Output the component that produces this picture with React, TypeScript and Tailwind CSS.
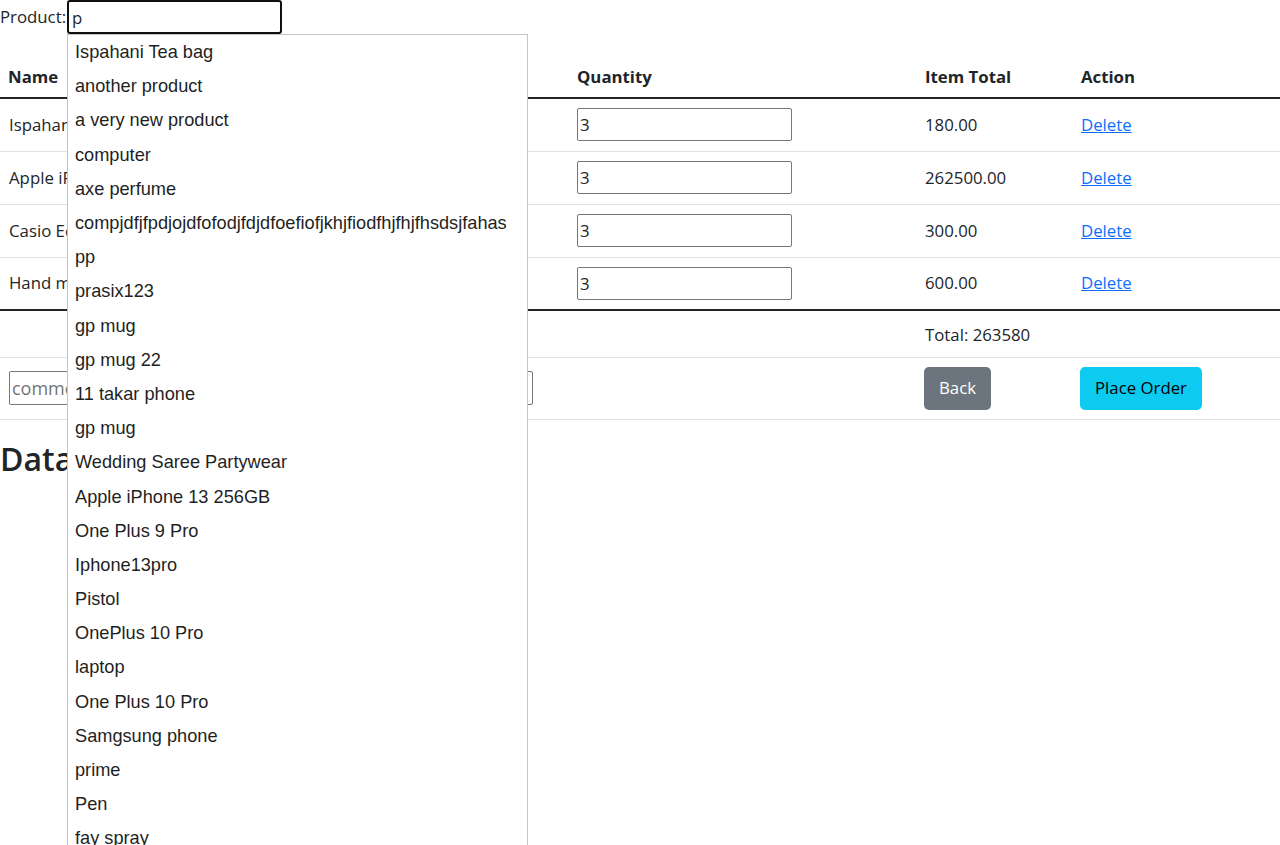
import React from "react";

const items = [
  { name: "Ispahani Tea bag", price: "60.00", qty: "3", total: "180.00" },
  { name: "Apple iPhone 13 256GB", price: "87500.00", qty: "3", total: "262500.00" },
  { name: "Casio Edifice Watch", price: "100.00", qty: "3", total: "300.00" },
  { name: "Hand mixer", price: "200.00", qty: "3", total: "600.00" },
];

const suggestions = [
  "Ispahani Tea bag",
  "another product",
  "a very new product",
  "computer",
  "axe perfume",
  "compjdfjfpdjojdfofodjfdjdfoefiofjkhjfiodfhjfhjfhsdsjfahas",
  "pp",
  "prasix123",
  "gp mug",
  "gp mug 22",
  "11 takar phone",
  "gp mug",
  "Wedding Saree Partywear",
  "Apple iPhone 13 256GB",
  "One Plus 9 Pro",
  "Iphone13pro",
  "Pistol",
  "OnePlus 10 Pro",
  "laptop",
  "One Plus 10 Pro",
  "Samgsung phone",
  "prime",
  "Pen",
  "fay spray",
];

function App() {
  return (
    <div className="relative h-[845px] overflow-hidden bg-white text-[16.8px] leading-6 text-[#212529] font-['Segoe_UI','Open_Sans',sans-serif]">
      {/* product search */}
      <div className="flex items-center h-[34px]">
        <label className="w-[67px] whitespace-nowrap">Product:</label>
        <input
          className="w-[215px] h-[34px] border-2 border-[#101010] rounded-[3px] px-[3px] outline-none text-[16.8px]"
          defaultValue="p"
        />
      </div>

      <table className="w-full table-fixed mt-[23px]">
        <colgroup>
          <col className="w-[285px]" />
          <col className="w-[284px]" />
          <col className="w-[348px]" />
          <col className="w-[156px]" />
          <col />
        </colgroup>
        <thead>
          <tr className="border-b-2 border-[#212529]">
            <th className="text-left font-bold px-2 py-2">Name</th>
            <th className="text-left font-bold px-2 py-2">Price</th>
            <th className="text-left font-bold px-2 py-2">Quantity</th>
            <th className="text-left font-bold px-2 py-2">Item Total</th>
            <th className="text-left font-bold px-2 py-2">Action</th>
          </tr>
        </thead>
        <tbody>
          {items.map((it, i) => (
            <tr
              key={it.name}
              className={
                i === items.length - 1
                  ? "border-b-2 border-[#212529]"
                  : "border-b border-[#dee2e6]"
              }
            >
              <td className="pl-[9px] pr-2 h-[53px] align-middle whitespace-nowrap overflow-hidden">{it.name}</td>
              <td className="px-2 h-[53px] align-middle">{it.price}</td>
              <td className="px-2 h-[53px] align-middle">
                <input
                  className="block w-[215px] h-[33px] border border-[#767676] rounded-[2px] px-[2px] text-[16.8px]"
                  defaultValue={it.qty}
                />
              </td>
              <td className="px-2 h-[53px] align-middle">{it.total}</td>
              <td className="px-2 h-[53px] align-middle">
                <a href="#" className="text-[#0d6efd] underline">
                  Delete
                </a>
              </td>
            </tr>
          ))}
          <tr className="border-b border-[#dee2e6]">
            <td className="px-2 h-[47px]"></td>
            <td className="px-2"></td>
            <td className="px-2"></td>
            <td className="px-2 pt-[2px] align-middle">Total: 263580</td>
            <td className="px-2"></td>
          </tr>
          <tr className="border-b border-[#dee2e6]">
            <td colSpan={2} className="px-2 h-[62px] align-middle">
              <input
                className="block ml-px w-[524px] h-[34px] border border-[#767676] rounded-[2px] px-[2px] text-[18px] placeholder:text-[#757575]"
                placeholder="comment..."
              />
            </td>
            <td></td>
            <td className="px-2 align-middle">
              <button className="h-[43px] px-[15px] -ml-px rounded-[5px] bg-[#6c757d] text-white">
                Back
              </button>
            </td>
            <td className="px-2 align-middle">
              <button className="h-[43px] px-[15px] -ml-px rounded-[5px] bg-[#0dcaf0] text-black">
                Place Order
              </button>
            </td>
          </tr>
        </tbody>
      </table>

      <h2 className="mt-5 text-[32px] leading-[1.2] font-semibold">Data Table</h2>

      {/* datalist dropdown */}
      <div className="absolute left-[67px] top-[34px] w-[461px] bg-white border border-[#c4c4c4] font-['Liberation_Sans',Arial,sans-serif] text-[18.2px] text-[#1f1f1f]">
        {suggestions.map((s, i) => (
          <div key={i} className="h-[34.2px] flex items-center pl-[7px] whitespace-nowrap">
            {s}
          </div>
        ))}
      </div>
    </div>
  );
}

export default App;
